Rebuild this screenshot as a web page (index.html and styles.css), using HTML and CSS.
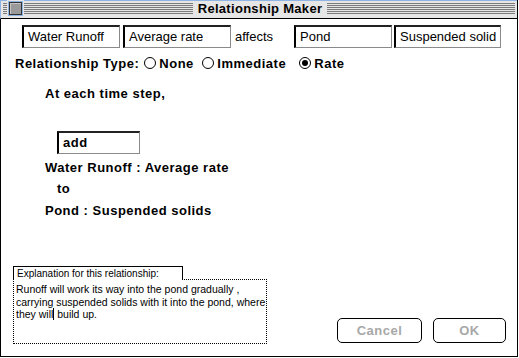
FILE: index.html
```html
<!DOCTYPE html>
<html lang="en">
<head>
<meta charset="UTF-8" />
<title>Relationship Maker</title>
<link rel="stylesheet" href="styles.css">
</head>
<body>

<div class="window">
  <div class="titlebar">
    <div class="stripes">
      <span class="closebox"></span>
      <span class="title">Relationship Maker</span>
    </div>
  </div>

  <div class="content">
    <div class="fields">
      <div class="field f1">Water Runoff</div>
      <div class="field f2">Average rate</div>
      <span class="affects">affects</span>
      <div class="field f3">Pond</div>
      <div class="field f4">Suspended solid</div>
    </div>

    <div class="type-row">
      <span class="type-label">Relationship Type:</span>
      <label class="radio r-none"><span class="dot"></span>None</label>
      <label class="radio r-imm"><span class="dot"></span>Immediate</label>
      <label class="radio on"><span class="dot"></span>Rate</label>
    </div>

    <div class="line step">At each time step,</div>
    <div class="field op">add</div>
    <div class="line from">Water Runoff : Average rate</div>
    <div class="line to">to</div>
    <div class="line dest">Pond : Suspended solids</div>

    <div class="bottom">
      <div class="explain">
        <div class="explain-label">Explanation for this relationship:</div>
        <div class="explain-text">Runoff will work its way into the pond gradually ,<br>carrying suspended solids with it into the pond, where<br>they will<span class="caret"></span> build up.</div>
      </div>
      <button class="btn cancel">Cancel</button>
      <button class="btn ok">OK</button>
    </div>
  </div>
</div>

</body>
</html>
```

FILE: styles.css
```css
* {
  box-sizing: border-box;
}
body {
  margin: 0;
  background: #fff;
  font-family: 'Liberation Sans', Arial, sans-serif;
  color: #000;
}
.window {
  width: 518px;
  height: 357px;
  border: 1px solid #000;
  border-top: none;
  background: #fff;
}

/* title bar */
.titlebar {
  height: 19px;
  background: #e6e6e6;
  border-top: 1px solid #8fb3e3;
  border-left: 1px solid #8fb3e3;
  border-bottom: 1px solid #000;
  margin-left: -1px;
  padding: 2px 2px 0 2px;
}
.stripes {
  height: 12px;
  background: repeating-linear-gradient(to bottom, #7a7a7a 0, #7a7a7a 1px, #e6e6e6 1px, #e6e6e6 2px);
  position: relative;
  display: flex;
  justify-content: center;
  align-items: center;
}
.closebox {
  position: absolute;
  left: 6px;
  top: -1px;
  width: 13px;
  height: 13px;
  background: #9a9a9a;
  border: 1px solid #333;
  box-shadow: 0 0 0 2px #e6e6e6, inset 1px 1px 0 #c4c4c4;
  outline: 1px solid #8fb3e3;
}
.title {
  background: #e6e6e6;
  padding: 0 5px;
  font-weight: 700;
  font-size: 13px;
  letter-spacing: 0.3px;
  line-height: 16px;
  margin-left: 2px;
}

.content {
  padding-top: 6px;
}

/* fields */
.field {
  height: 23px;
  border-top: 2px solid #222;
  border-left: 2px solid #000;
  border-right: 1px solid #8a8a8a;
  border-bottom: 1px solid #8a8a8a;
  font-size: 13px;
  line-height: 19px;
  padding-left: 4px;
  white-space: nowrap;
  overflow: hidden;
}
.fields {
  display: flex;
  align-items: center;
  padding-left: 21px;
}
.f1 { width: 98px; }
.f2 { width: 108px; margin-left: 3px; }
.f3 { width: 98px; }
.f4 { width: 107px; margin-left: 2px; }
.affects {
  font-size: 13px;
  width: 63px;
  padding-left: 4px;
}

/* radio row */
.type-row {
  margin-top: 6px;
  height: 18px;
  display: flex;
  align-items: center;
  padding-left: 14px;
  font-size: 13px;
  font-weight: 700;
  letter-spacing: 0.5px;
}
.type-label {
  flex-shrink: 0;
  margin-right: 5px;
}
.radio {
  display: flex;
  align-items: center;
  flex-shrink: 0;
}
.r-none { width: 58px; }
.r-imm { width: 97px; }
.dot {
  width: 12px;
  height: 12px;
  border: 1px solid #000;
  border-radius: 50%;
  margin-right: 3px;
  position: relative;
}
.radio.on .dot::after {
  content: "";
  position: absolute;
  left: 2px;
  top: 2px;
  width: 6px;
  height: 6px;
  border-radius: 50%;
  background: #000;
}

/* rule text */
.line {
  font-size: 13px;
  font-weight: 700;
  letter-spacing: 0.5px;
  line-height: 18px;
  padding-left: 44px;
}
.step { margin-top: 13px; }
.op {
  width: 83px;
  margin: 28px 0 0 56px;
  font-weight: 700;
  letter-spacing: 0.5px;
}
.from { margin-top: 5px; }
.to { margin-top: 3px; padding-left: 56px; }
.dest { margin-top: 4px; }

/* bottom */
.bottom {
  margin-top: 46px;
  display: flex;
  align-items: flex-end;
  padding-left: 12px;
}
.explain {
  width: 254px;
}
.explain-label {
  width: 170px;
  height: 14px;
  border: 1px solid #000;
  border-bottom: none;
  font-size: 10px;
  line-height: 13px;
  padding-left: 3px;
  position: relative;
  z-index: 1;
  background: #fff;
}
.explain-text {
  height: 65px;
  border: 1px dotted #000;
  font-size: 10.5px;
  line-height: 12.5px;
  padding: 3px 0 0 2px;
  margin-top: -1px;
  white-space: nowrap;
}
.caret {
  display: inline-block;
  width: 1px;
  height: 12px;
  background: #000;
  vertical-align: -2px;
}
.btn {
  height: 25px;
  border: 1px solid #000;
  border-radius: 5px;
  background: #fff;
  color: #a8a8a8;
  font-family: 'Liberation Sans', Arial, sans-serif;
  font-weight: 700;
  font-size: 13px;
  letter-spacing: 0.5px;
  margin-bottom: 1px;
  padding: 0;
}
.cancel {
  width: 85px;
  margin-left: auto;
}
.ok {
  width: 73px;
  margin-left: 11px;
  margin-right: 11px;
}
```
